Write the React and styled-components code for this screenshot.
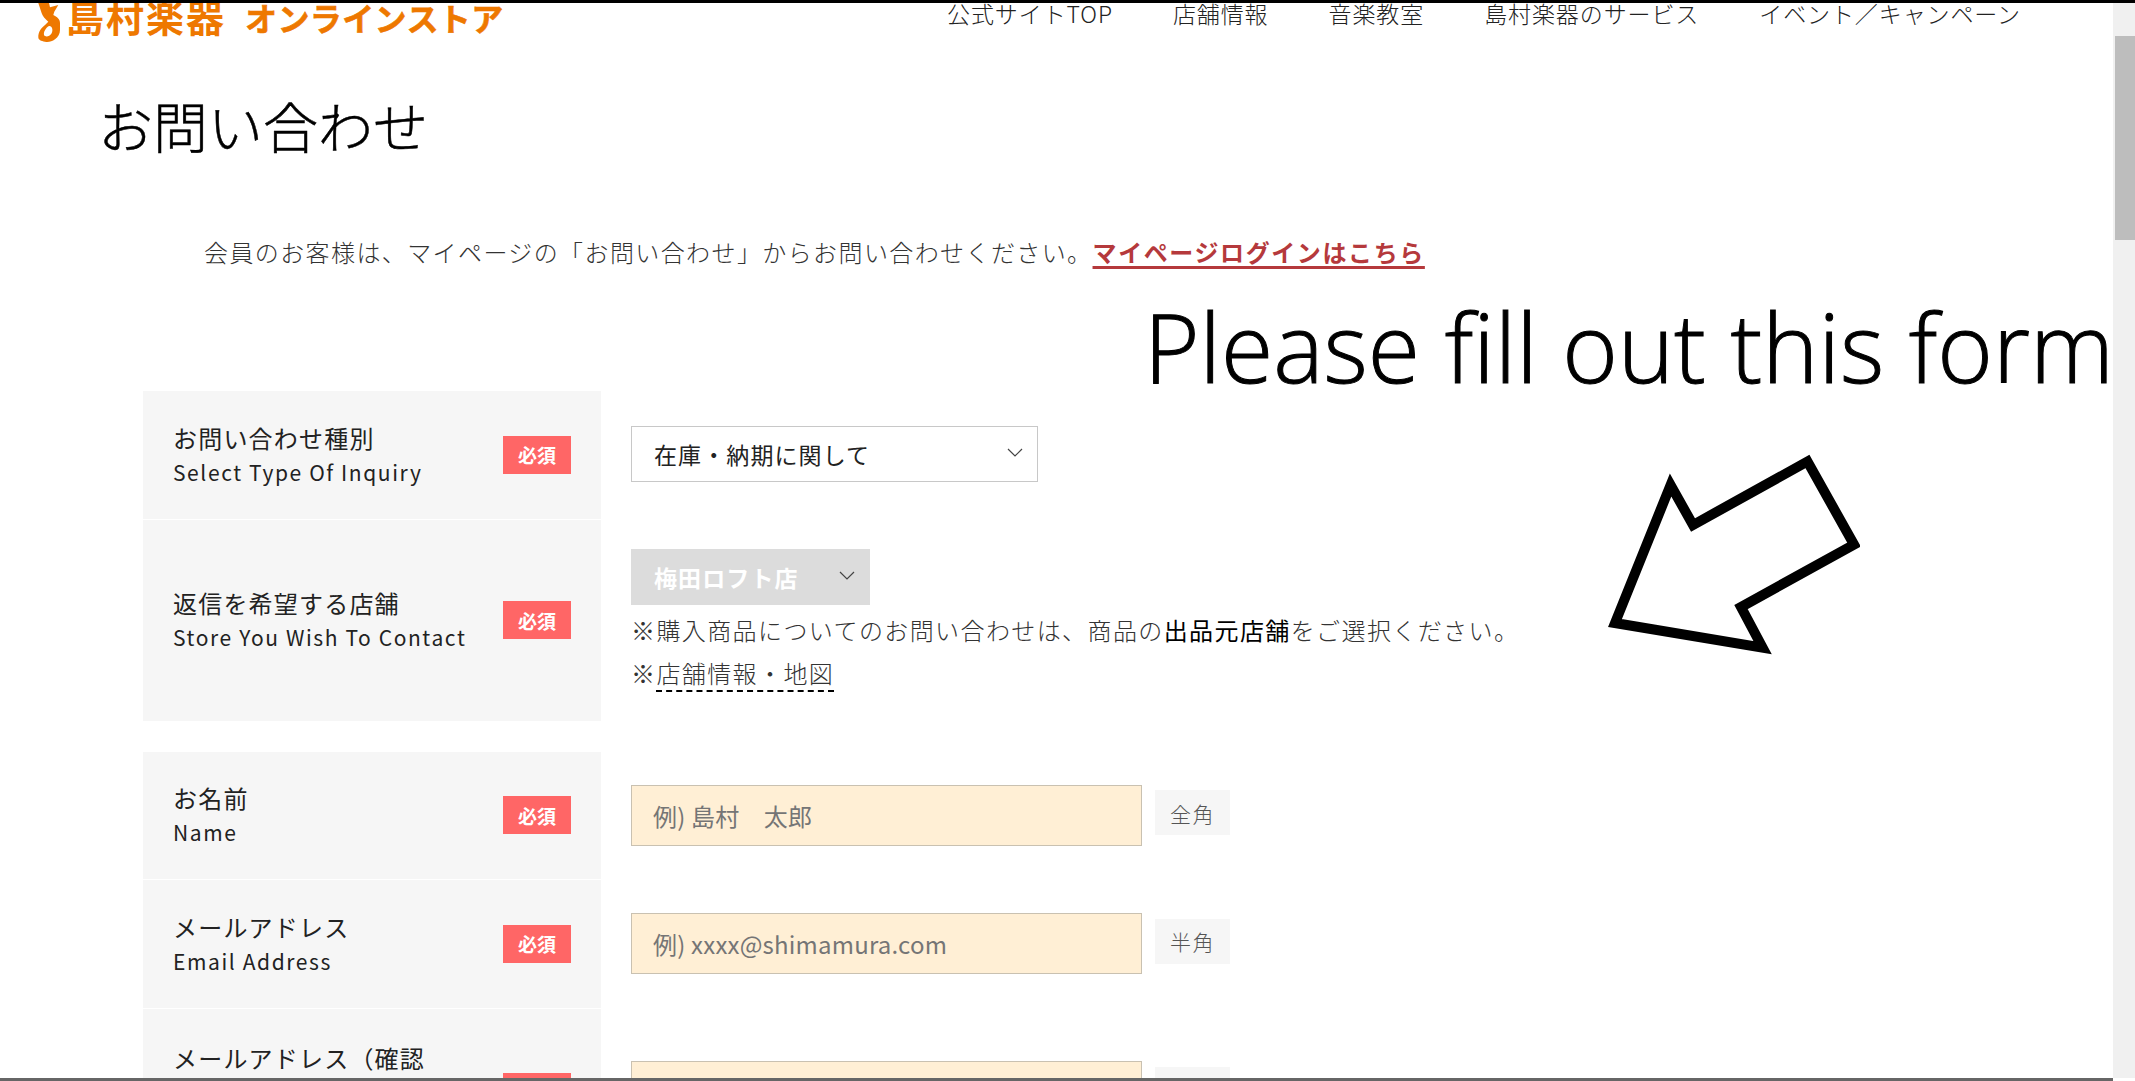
import React from "react";
import styled, { createGlobalStyle } from "styled-components";

const GlobalStyle = createGlobalStyle`
  html, body {
    margin: 0;
    padding: 0;
    background: #fff;
    overflow: hidden;
  }
  body {
    font-family: "Noto Sans CJK JP", "Noto Sans", sans-serif;
    font-weight: 400;
    color: #333;
  }
`;

const NAV_ITEMS = [
  "公式サイトTOP",
  "店舗情報",
  "音楽教室",
  "島村楽器のサービス",
  "イベント／キャンペーン",
];

const Chevron = () => (
  <svg width="16" height="9" viewBox="0 0 16 9" fill="none" stroke="#444" strokeWidth="1.2">
    <polyline points="1,1 8,8 15,1" />
  </svg>
);

const LogoMark = () => (
  <svg width="24" height="40" viewBox="0 0 24 40">
    <path
      fill="#ee7800"
      fillRule="evenodd"
      d="M1.3 0 L12 0 L13 4.3 L21.3 2 L17.3 8.7 L16.3 12 C20 14 23 16 23 20 L23 27 C23 31 21 34 18 36.3 C15 38.5 11 39.5 8 38.7 C4 38 1.3 37 1.3 34 C1.3 29 4 25 8 22 L11.3 18.7 C8 16 5.5 13 4.7 10.3 Z M12 23 C8.5 25 6.5 29 7 32 C8.5 34.5 12.5 33.5 14.5 30.5 C16.5 27 15 22.5 12 23 Z"
    />
  </svg>
);

const App = () => (
  <Screen>
    <GlobalStyle />
    <TopEdge />
    <Body>
      <Page>
        <Header>
          <Logo>
            <LogoMark />
            <LogoName>島村楽器</LogoName>
            <LogoStore>オンラインストア</LogoStore>
          </Logo>
          <Nav>
            {NAV_ITEMS.map((item) => (
              <NavLink key={item}>{item}</NavLink>
            ))}
          </Nav>
        </Header>

        <Main>
          <Title>お問い合わせ</Title>
          <Intro>
            会員のお客様は、マイページの「お問い合わせ」からお問い合わせください。
            <LoginLink>マイページログインはこちら</LoginLink>
          </Intro>

          <FormGroup>
            <Row>
              <Label>
                <LabelText>
                  <LabelJa>お問い合わせ種別</LabelJa>
                  <LabelEn>Select Type Of Inquiry</LabelEn>
                </LabelText>
                <Badge>必須</Badge>
              </Label>
              <Field>
                <SelectWrap $width={407}>
                  <Select defaultValue="stock">
                    <option value="stock">在庫・納期に関して</option>
                  </Select>
                  <ChevronSlot><Chevron /></ChevronSlot>
                </SelectWrap>
              </Field>
            </Row>
            <Row>
              <Label>
                <LabelText>
                  <LabelJa>返信を希望する店舗</LabelJa>
                  <LabelEn>Store You Wish To Contact</LabelEn>
                </LabelText>
                <Badge>必須</Badge>
              </Label>
              <StoreField>
                <SelectWrap $width={239}>
                  <Select disabled defaultValue="umeda">
                    <option value="umeda">梅田ロフト店</option>
                  </Select>
                  <ChevronSlot><Chevron /></ChevronSlot>
                </SelectWrap>
                <Notes>
                  <Note>
                    ※購入商品についてのお問い合わせは、商品の<strong>出品元店舗</strong>をご選択ください。
                  </Note>
                  <Note>
                    ※<MapLink>店舗情報・地図</MapLink>
                  </Note>
                </Notes>
              </StoreField>
            </Row>
          </FormGroup>

          <FormGroup>
            <Row>
              <Label>
                <LabelText>
                  <LabelJa>お名前</LabelJa>
                  <LabelEn>Name</LabelEn>
                </LabelText>
                <Badge>必須</Badge>
              </Label>
              <Field>
                <Input placeholder="例) 島村　太郎" />
                <Tag>全角</Tag>
              </Field>
            </Row>
            <Row>
              <Label>
                <LabelText>
                  <LabelJa>メールアドレス</LabelJa>
                  <LabelEn>Email Address</LabelEn>
                </LabelText>
                <Badge>必須</Badge>
              </Label>
              <Field>
                <Input placeholder="例) xxxx@shimamura.com" />
                <Tag>半角</Tag>
              </Field>
            </Row>
            <Row>
              <Label $tall>
                <LabelText>
                  <LabelJa>メールアドレス（確認<br />用）</LabelJa>
                  <LabelEn>Email Address (Confirm)</LabelEn>
                </LabelText>
                <Badge>必須</Badge>
              </Label>
              <Field>
                <Input />
                <Tag>半角</Tag>
              </Field>
            </Row>
          </FormGroup>
        </Main>

        {/* annotation drawn over the page */}
        <Callout>Please fill out this form</Callout>
        <CalloutArrow width="260" height="230" viewBox="1600 440 260 230">
          <polygon
            points="1615,623 1670.6,485 1693,525 1807.5,461.5 1854,544.6 1741,607 1762.6,647.6"
            fill="none"
            stroke="#000"
            strokeWidth="10"
            strokeMiterlimit="10"
          />
        </CalloutArrow>
      </Page>
      <ScrollTrack>
        <ScrollThumb />
      </ScrollTrack>
    </Body>
    <BottomEdge />
  </Screen>
);

export default App;

const Screen = styled.div`
  display: flex;
  flex-direction: column;
  height: 100vh;
  overflow: hidden;
`;

const TopEdge = styled.div`
  flex: none;
  height: 3px;
  background: #000;
  position: relative;
  z-index: 2;
`;

const BottomEdge = styled.div`
  flex: none;
  height: 3px;
  margin-right: 22px;
  background: #666;
`;

const Body = styled.div`
  flex: 1;
  min-height: 0;
  display: flex;
`;

const Page = styled.div`
  flex: 1;
  min-width: 0;
  position: relative;
  overflow: hidden;
`;

const ScrollTrack = styled.div`
  flex: none;
  width: 22px;
  padding-top: 33px;
  box-sizing: border-box;
  background: #f0f0f0;
`;

const ScrollThumb = styled.div`
  width: 20px;
  height: 204px;
  margin-left: 2px;
  background: #bdbdbd;
`;

const Header = styled.header`
  display: flex;
  justify-content: space-between;
  height: 42px;
  padding: 0 92px 0 37px;
  overflow: hidden;
`;

const Logo = styled.div`
  display: flex;
  align-items: flex-start;
  color: #ee7800;
  font-weight: 700;
`;

const LogoName = styled.span`
  margin: -7px 0 0 5px;
  font-size: 38px;
  line-height: 40px;
  letter-spacing: 2px;
`;

const LogoStore = styled.span`
  margin: -6px 0 0 19px;
  font-size: 32px;
  line-height: 40px;
  letter-spacing: 0.4px;
  white-space: nowrap;
  -webkit-text-stroke: 0.6px #ee7800;
`;

const Nav = styled.nav`
  display: flex;
  gap: 60px;
  margin-top: -2px;
`;

const NavLink = styled.a`
  font-size: 23px;
  font-weight: 300;
  line-height: 24px;
  letter-spacing: 0.9px;
  color: #222;
  white-space: nowrap;
`;

const Main = styled.main`
  padding: 40px 0 0 143px;
`;

const Title = styled.h1`
  margin: 0 0 0 -45px;
  font-size: 55px;
  font-weight: 300;
  line-height: 78px;
  color: #000;
  -webkit-text-stroke: 0.5px #000;
`;

const Intro = styled.p`
  margin: 71px 0 0 61px;
  font-size: 24px;
  font-weight: 300;
  line-height: 36px;
  letter-spacing: 1.4px;
  color: #333;
`;

const LoginLink = styled.a`
  font-weight: 700;
  letter-spacing: 1.6px;
  color: #b5393c;
  text-decoration: underline;
  text-decoration-thickness: 3px;
  text-underline-offset: 4px;
`;

const FormGroup = styled.div`
  display: flex;
  flex-direction: column;
  gap: 1px;
  margin-top: 31px;

  &:first-of-type {
    margin-top: 121px;
  }
`;

const Row = styled.div`
  display: grid;
  grid-template-columns: 458px 1fr;
  column-gap: 30px;
  min-height: 127.5px;
`;

const Label = styled.div`
  display: flex;
  align-items: center;
  justify-content: space-between;
  padding: ${(props) => (props.$tall ? "32px" : "0")} 30px;
  background: #f6f6f6;
`;

const LabelText = styled.div`
  width: 296px;
`;

const LabelJa = styled.div`
  font-size: 24px;
  line-height: 34px;
  letter-spacing: 1.2px;
  color: #222;
`;

const LabelEn = styled.div`
  font-size: 21px;
  line-height: 34px;
  letter-spacing: 1.6px;
  color: #222;
`;

const Badge = styled.span`
  flex: none;
  width: 68px;
  height: 38px;
  display: flex;
  align-items: center;
  justify-content: center;
  background: #ff6666;
  color: #fff;
  font-size: 19px;
  font-weight: 700;
`;

const Field = styled.div`
  display: flex;
  align-items: center;
  gap: 13px;
`;

const StoreField = styled.div`
  display: flex;
  flex-direction: column;
  align-items: flex-start;
  padding: 29px 0 27px;
`;

const SelectWrap = styled.div`
  position: relative;
  width: ${(props) => props.$width}px;
  height: 56px;
  margin-bottom: 2px;
`;

const Select = styled.select`
  appearance: none;
  width: 100%;
  height: 100%;
  box-sizing: border-box;
  padding: 0 0 0 22px;
  border: 1px solid #c8c8c8;
  border-radius: 0;
  background: #fff;
  font-family: inherit;
  font-size: 23px;
  font-weight: 400;
  letter-spacing: 1.1px;
  color: #222;
  opacity: 1;

  &:disabled {
    border-color: #dcdcdc;
    background: #dcdcdc;
    color: #fff;
    font-weight: 700;
  }
`;

const ChevronSlot = styled.span`
  position: absolute;
  top: 22px;
  right: 15px;
  display: flex;
`;

const Notes = styled.div`
  margin-top: 1px;
`;

const Note = styled.p`
  margin: 0;
  font-size: 24px;
  font-weight: 300;
  line-height: 43px;
  letter-spacing: 1.4px;
  color: #333;

  strong {
    font-weight: 400;
    color: #000;
  }
`;

const MapLink = styled.a`
  border-bottom: 2px dashed #000;
`;

const Input = styled.input`
  width: 511px;
  height: 61px;
  box-sizing: border-box;
  padding: 0 21px;
  border: 1px solid #c9c1b1;
  border-radius: 0;
  background: #ffefd5;
  font-family: inherit;
  font-size: 24px;
  font-weight: 400;
  letter-spacing: 0.2px;

  &::placeholder {
    color: #757575;
    opacity: 1;
  }
`;

const Tag = styled.span`
  width: 75px;
  height: 45px;
  margin-bottom: 5px;
  display: flex;
  align-items: center;
  justify-content: center;
  background: #f6f6f6;
  font-size: 21px;
  font-weight: 300;
  letter-spacing: 1.5px;
  color: #555;
`;

const Callout = styled.div`
  position: absolute;
  top: 278px;
  left: 1144px;
  font-family: "Open Sans", sans-serif;
  font-size: 95px;
  font-weight: 300;
  line-height: 130px;
  color: #000;
  white-space: nowrap;
  -webkit-text-stroke: 1px #000;
`;

const CalloutArrow = styled.svg`
  position: absolute;
  top: 437px;
  left: 1600px;
`;
